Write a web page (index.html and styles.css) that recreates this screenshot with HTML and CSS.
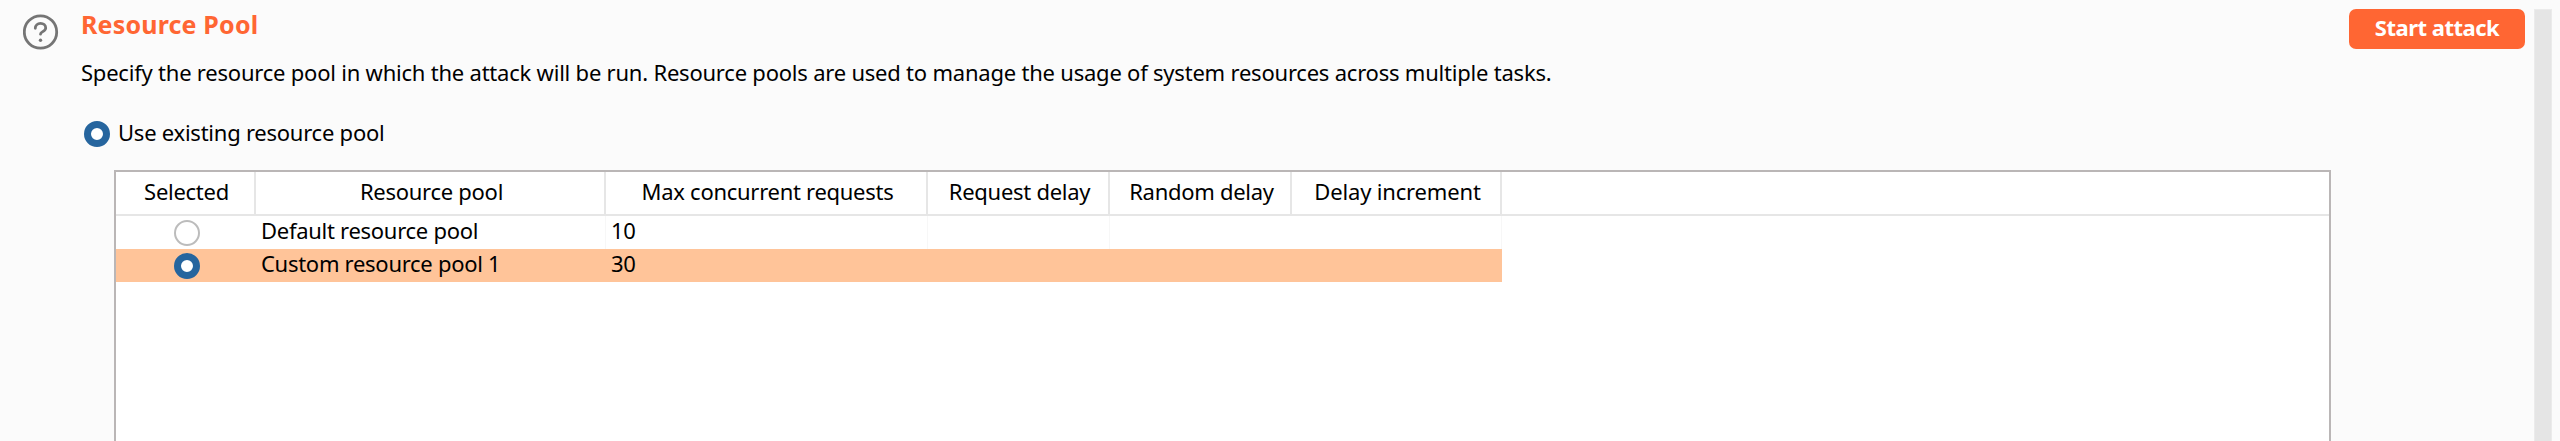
FILE: index.html
```html
<!DOCTYPE html>
<html lang="en">
<head>
<meta charset="utf-8">
<title>Resource Pool</title>
<link rel="stylesheet" href="styles.css">
</head>
<body>
<main class="panel">
  <svg class="help" viewBox="0 0 36 36" fill="none" stroke="#757575" stroke-linecap="round">
    <circle cx="17.5" cy="18" r="16.2" stroke-width="2.8"/>
    <path d="M12.3 14.3C12.3 11.2 14.6 9.4 17.5 9.4S22.7 11.2 22.7 14C22.7 17.4 17.5 17.8 17.5 20.2" stroke-width="2.8"/>
    <circle cx="17.5" cy="26.2" r="1.7" fill="#757575" stroke="none"/>
  </svg>
  <section class="content">
    <h1 class="title">Resource Pool</h1>
    <p class="description">Specify the resource pool in which the attack will be run. Resource pools are used to manage the usage of system resources across multiple tasks.</p>
    <div class="option"><span class="radio on"></span><span class="label">Use existing resource pool</span></div>
    <div class="table">
      <div class="row head">
        <div class="cell">Selected</div>
        <div class="cell">Resource pool</div>
        <div class="cell">Max concurrent requests</div>
        <div class="cell">Request delay</div>
        <div class="cell">Random delay</div>
        <div class="cell increment">Delay increment</div>
      </div>
      <div class="row">
        <div class="cell pick"><span class="radio"></span></div>
        <div class="cell">Default resource pool</div>
        <div class="cell">10</div>
        <div class="cell"></div>
        <div class="cell plain"></div>
        <div class="cell"></div>
      </div>
      <div class="row selected">
        <div class="cell pick"><span class="radio on"></span></div>
        <div class="cell">Custom resource pool 1</div>
        <div class="cell">30</div>
        <div class="cell"></div>
        <div class="cell"></div>
        <div class="cell"></div>
      </div>
    </div>
  </section>
  <button class="start">Start attack</button>
  <div class="scrollbar"></div>
</main>
</body>
</html>
```
FILE: styles.css
```css
* { box-sizing: border-box; }
body {
  margin: 0;
  background: #fbfbfb;
  color: #000;
  font: 22px/30px "Noto Sans", "Open Sans", sans-serif;
  letter-spacing: -0.28px;
  overflow: hidden;
}
.panel {
  display: flex;
  align-items: flex-start;
  height: 441px;
  padding-top: 9px;
}
.help { width: 36px; height: 36px; margin: 5px 0 0 23px; flex: none; }
.content { width: 2249px; margin-left: 23px; flex: none; white-space: nowrap; }
.title {
  margin: 0 0 0 -1px;
  font-size: 25px;
  line-height: 30px;
  font-weight: 700;
  letter-spacing: 0.18px;
  color: #ff6633;
}
.description { margin: 18px 0 0 -1px; letter-spacing: -0.215px; }
.option { display: flex; align-items: center; gap: 8px; margin: 32px 0 0 2px; height: 30px; }
.option .label { padding-bottom: 4px; letter-spacing: -0.24px; }
.radio {
  flex: none;
  width: 26px;
  height: 26px;
  border: 2px solid #bcbcbc;
  border-radius: 50%;
  background: #fff;
}
.radio.on { border: 7px solid #26659e; }
.table {
  height: 290px;
  margin: 21px 0 0 32px;
  border: 2px solid #bab6b6;
  background: #fff;
}
.row {
  display: grid;
  grid-template-columns: 140px 350px 322px 182px 182px 210px;
  width: 1386px;
  height: 33px;
}
.cell { padding: 0 0 0 5px; border-right: 1px solid #f7f7f7; line-height: 29px; }
.cell.pick { display: flex; justify-content: center; align-items: center; padding: 0 0 0 1px; border: 0; }
.cell.plain { border: 0; }
.head { width: auto; height: 44px; border-bottom: 2px solid #e6e6e6; }
.head .cell { padding: 5px 0 0 3px; border-right: 2px solid #e6e6e6; text-align: center; }
.head .increment { letter-spacing: -0.16px; }
.selected { background: #ffc499; }
.selected .cell { border: 0; }
.start {
  width: 176px;
  height: 40px;
  margin-left: 18px;
  padding: 0 0 4px;
  border: 0;
  border-radius: 7px;
  background: #ff6633;
  color: #fff;
  font: 700 22px/30px "Noto Sans", "Open Sans", sans-serif;
  letter-spacing: -0.5px;
  white-space: nowrap;
  flex: none;
}
.scrollbar {
  width: 18px;
  height: 432px;
  margin-left: 9px;
  border: 1px solid #ebebeb;
  border-bottom: 0;
  background: #e5e5e5;
  flex: none;
}
```
